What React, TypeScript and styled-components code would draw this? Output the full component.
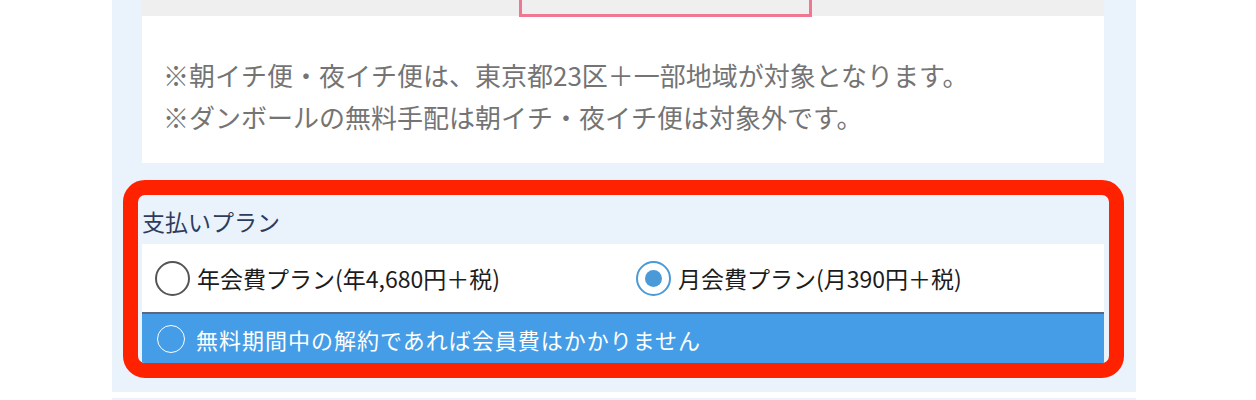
import { FunctionComponent } from 'react';
import styled, { createGlobalStyle } from 'styled-components';

const GlobalStyle = createGlobalStyle`
  body {
    margin: 0;
    background: #ffffff;
    font-family: "Noto Sans CJK JP", "Noto Sans", sans-serif;
  }
`;

const Page = styled.div`
  padding-left: 112px;
`;

const Panel = styled.section<{ $height?: number }>`
  width: 1024px;
  box-sizing: border-box;
  background: #eaf3fb;
  padding: 0 32px 14px 30px;
  ${(p) => (p.$height ? `height: ${p.$height}px;` : '')}
`;

const Spacer = styled.div`
  height: 6px;
`;

const NoticeCard = styled.div`
  background: #ffffff;
`;

const Preview = styled.div`
  height: 16px;
  background: #efefef;
  display: flex;
`;

const PinkFrame = styled.div`
  margin-left: 377px;
  width: 293px;
  height: 17px;
  box-sizing: border-box;
  border: 3px solid #f07792;
  border-top: none;
`;

const Notes = styled.p`
  margin: 0;
  padding: 38px 21px 25px;
  font-size: 26px;
  line-height: 42px;
  color: #747474;
`;

const Highlight = styled.div`
  margin: 17px -20px 0 -19px;
  border: 15px solid #ff2200;
  border-radius: 22px;
  overflow: hidden;
  padding: 0 5px 0 4px;
`;

const PlanLabel = styled.div`
  padding-top: 3px;
  line-height: 46px;
  font-size: 23px;
  color: #2f3b5c;
`;

const OptionRow = styled.div`
  background: #ffffff;
  height: 68px;
  display: grid;
  grid-template-columns: 481px 1fr;
  align-items: center;
  padding-left: 13px;
`;

const Option = styled.label`
  display: flex;
  align-items: center;
  gap: 7px;
  font-size: 23px;
  color: #1c1c1c;
`;

const Radio = styled.span<{ $checked?: boolean }>`
  width: 35px;
  height: 35px;
  box-sizing: border-box;
  border-radius: 50%;
  border: 2px solid ${(p) => (p.$checked ? '#4a9ad8' : '#555555')};
  background: #ffffff;
  display: flex;
  align-items: center;
  justify-content: center;
  flex-shrink: 0;

  &::after {
    content: '';
    width: 17px;
    height: 17px;
    border-radius: 50%;
    background: ${(p) => (p.$checked ? '#4a9ad8' : 'transparent')};
  }
`;

const Divider = styled.div`
  height: 2px;
  background: #5b6682;
`;

const FreeBar = styled.div`
  height: 49px;
  background: #449de6;
  display: flex;
  align-items: center;
  gap: 11px;
  padding-left: 15px;
  font-size: 22px;
  letter-spacing: 1px;
  color: #ffffff;
`;

const Ring = styled.span`
  width: 28px;
  height: 28px;
  box-sizing: border-box;
  border-radius: 50%;
  border: 1.5px solid #ffffff;
  flex-shrink: 0;
`;

const App: FunctionComponent = () => {
  return (
    <Page>
      <GlobalStyle />
      <Panel>
        <NoticeCard>
          <Preview>
            <PinkFrame />
          </Preview>
          <Notes>
            ※朝イチ便・夜イチ便は、東京都23区＋一部地域が対象となります。
            <br />
            ※ダンボールの無料手配は朝イチ・夜イチ便は対象外です。
          </Notes>
        </NoticeCard>
        <Highlight>
          <PlanLabel>支払いプラン</PlanLabel>
          <OptionRow>
            <Option>
              <Radio />
              年会費プラン(年4,680円＋税)
            </Option>
            <Option>
              <Radio $checked />
              月会費プラン(月390円＋税)
            </Option>
          </OptionRow>
          <Divider />
          <FreeBar>
            <Ring />
            無料期間中の解約であれば会員費はかかりません
          </FreeBar>
        </Highlight>
      </Panel>
      <Spacer />
      <Panel $height={40} />
    </Page>
  );
};

export default App;
